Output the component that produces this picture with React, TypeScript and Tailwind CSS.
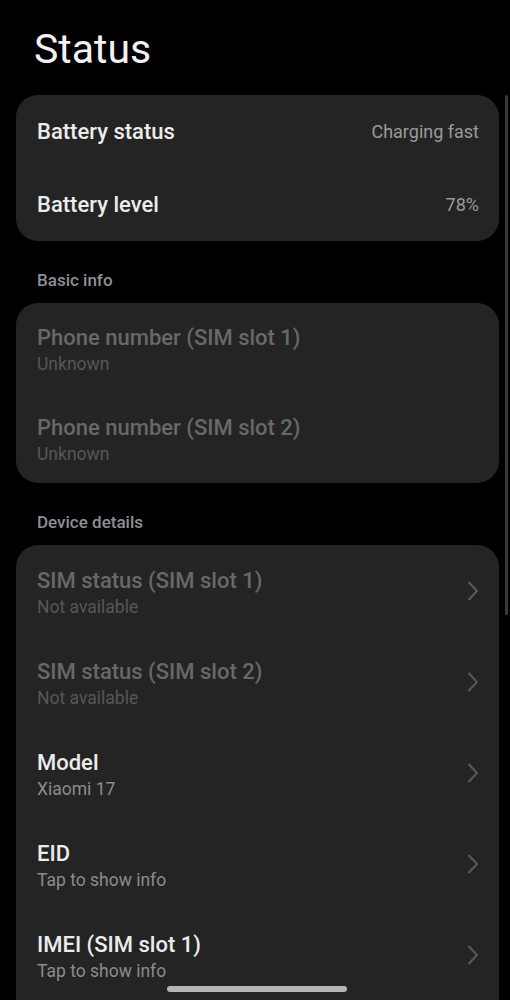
import { ReactNode } from "react";

const Chevron = () => (
  <svg width="12" height="20" viewBox="0 0 12 20" fill="none" className="shrink-0">
    <polyline
      points="2,1.5 10,10 2,18.5"
      stroke="#595959"
      strokeWidth="2"
      strokeLinecap="round"
      strokeLinejoin="round"
    />
  </svg>
);

const Card = ({ children, className = "" }: { children: ReactNode; className?: string }) => (
  <div className={`ml-4 mr-[11px] rounded-[22px] bg-[#242424] ${className}`}>{children}</div>
);

const SectionHeader = ({ label }: { label: string }) => (
  <div className="px-[37px] pt-[28px] pb-[12px] text-[17px] leading-[22px] font-medium text-[#8f8f98]">
    {label}
  </div>
);

const ValueRow = ({ title, value }: { title: string; value: string }) => (
  <div className="flex h-[73px] items-center justify-between pl-[21px] pr-[20px]">
    <span className="text-[22px] font-medium text-[#ececec]">{title}</span>
    <span className="text-[18px] text-[#9a9a9a]">{value}</span>
  </div>
);

const InfoRow = ({
  title,
  subtitle,
  disabled,
  chevron,
  height = "h-[91px]",
}: {
  title: string;
  subtitle: string;
  disabled?: boolean;
  chevron?: boolean;
  height?: string;
}) => (
  <div className={`flex ${height} items-center justify-between pl-[21px] pr-[20px]`}>
    <div className="flex flex-col pt-[4px]">
      <span
        className={`text-[22px] leading-[28px] font-medium ${
          disabled ? "text-[#686868]" : "text-[#ececec]"
        }`}
      >
        {title}
      </span>
      <span
        className={`text-[17.5px] leading-[24px] ${
          disabled ? "text-[#575757]" : "text-[#8c8c8c]"
        }`}
      >
        {subtitle}
      </span>
    </div>
    {chevron && <Chevron />}
  </div>
);

export default function App() {
  return (
    <div
      className="relative h-[1000px] w-full overflow-hidden bg-black"
      style={{ fontFamily: "Roboto, 'Noto Sans', sans-serif" }}
    >
      <h1 className="px-[34px] pt-[25px] pb-[22px] text-[41px] leading-[48px] font-normal text-[#f2f2f2]">
        Status
      </h1>

      <Card>
        <ValueRow title="Battery status" value="Charging fast" />
        <ValueRow title="Battery level" value="78%" />
      </Card>

      <SectionHeader label="Basic info" />
      <Card>
        <InfoRow title="Phone number (SIM slot 1)" subtitle="Unknown" disabled height="h-[90px]" />
        <InfoRow title="Phone number (SIM slot 2)" subtitle="Unknown" disabled height="h-[90px]" />
      </Card>

      <SectionHeader label="Device details" />
      <Card className="pb-10">
        <InfoRow title="SIM status (SIM slot 1)" subtitle="Not available" disabled chevron />
        <InfoRow title="SIM status (SIM slot 2)" subtitle="Not available" disabled chevron />
        <InfoRow title="Model" subtitle="Xiaomi 17" chevron />
        <InfoRow title="EID" subtitle="Tap to show info" chevron />
        <InfoRow title="IMEI (SIM slot 1)" subtitle="Tap to show info" chevron />
      </Card>

      {/* scrollbar */}
      <div className="absolute right-[2px] top-[95px] h-[520px] w-[3px] rounded-full bg-[#3a3a3a]" />

      {/* gesture bar */}
      <div className="absolute bottom-[8px] left-[167px] h-[6px] w-[180px] rounded-full bg-[#b5b5b5]" />
    </div>
  );
}
